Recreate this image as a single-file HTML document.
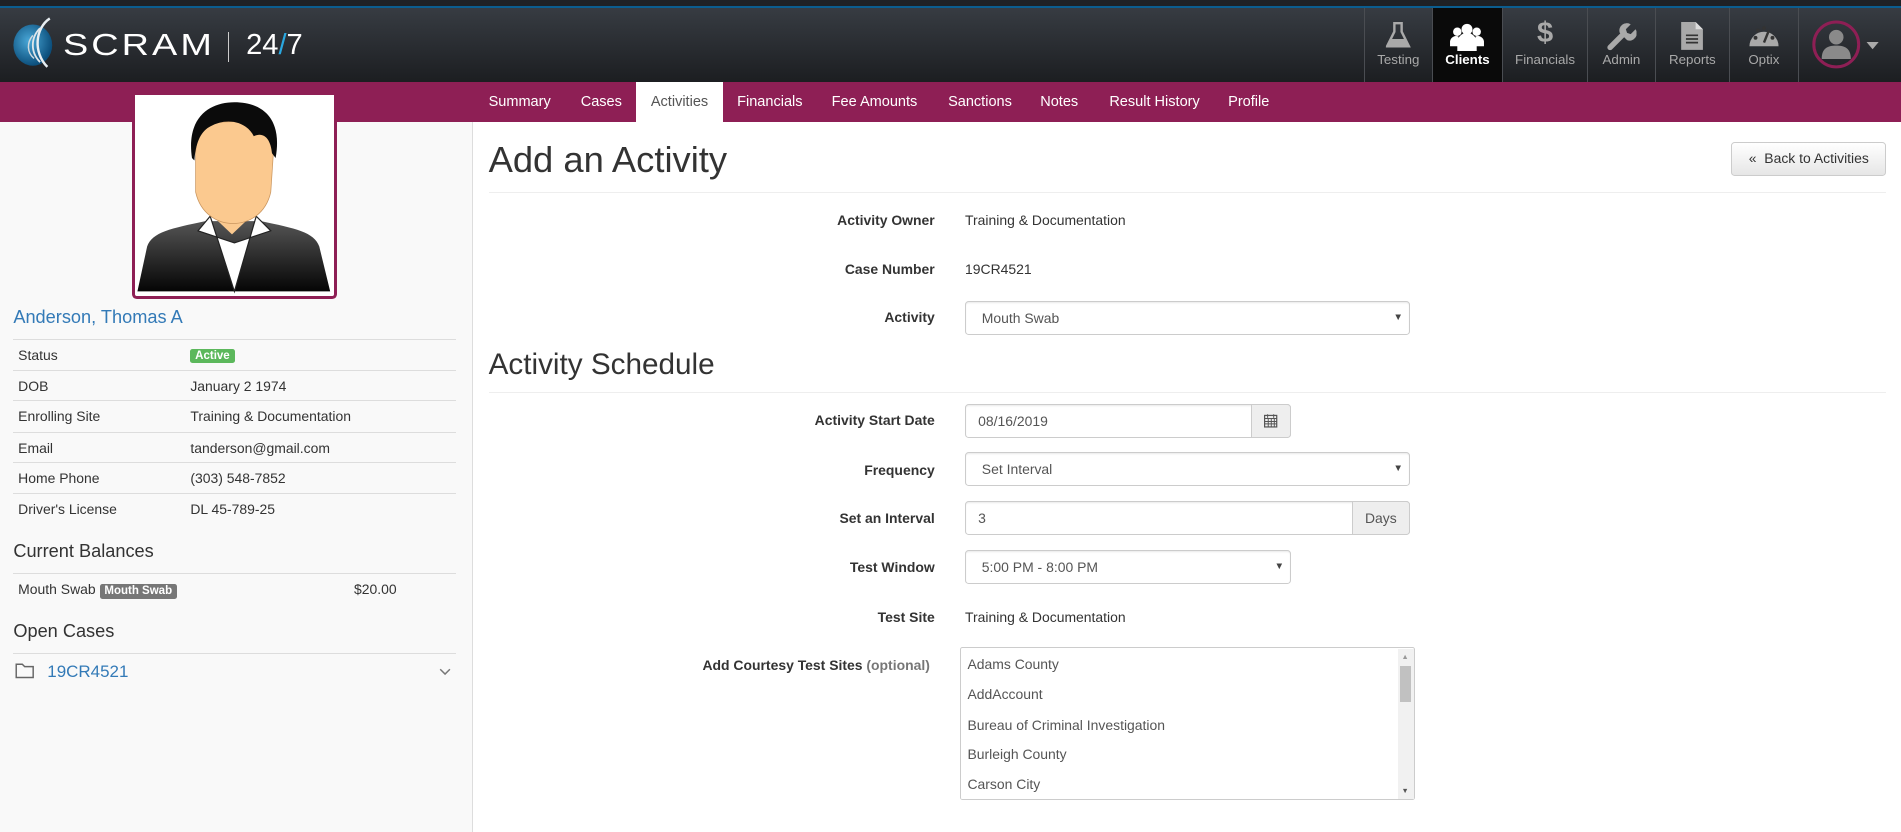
<!DOCTYPE html>
<html><head><meta charset="utf-8">
<style>
*{box-sizing:border-box;margin:0;padding:0}
html,body{width:1901px;height:832px;overflow:hidden;background:#fff}
#w{zoom:1.21237;width:1568px;height:686px;position:relative;font-family:"Liberation Sans",Arial,sans-serif;color:#333;font-size:11.5px;overflow:hidden}
.a{position:absolute}
#hdr{left:0;top:0;width:1568px;height:68px;background:linear-gradient(#3a3f46,#1c1e21)}
#topl{left:0;top:0;width:1568px;height:7px;background:#1f2125;border-bottom:2px solid #0b5d8f}
.nav{top:7px;height:61px;border-left:1px solid #4a4d52;text-align:center;color:#a9a9a9;font-size:11px}
.nav span{position:absolute;left:0;right:0;top:36px}
.nav svg{position:absolute;left:50%;top:11px;transform:translateX(-50%)}
#band{left:0;top:68px;width:1568px;height:33px;background:#8e1f55}
.tab{top:68px;height:33px;line-height:33px;color:#fff;font-size:12px}
#side{left:0;top:101px;width:390px;height:600px;background:#f9f9f9;border-right:1px solid #ddd}
.row{left:11px;width:365px;height:25.5px;border-top:1px solid #ddd;line-height:25px;padding-left:4px}
.row b{font-weight:normal;position:absolute;left:146px}
.lbl{width:380px;text-align:right;font-weight:bold;left:391px}
.ctl{border:1px solid #ccc;border-radius:3px;background:#fff;height:28px;line-height:27px;padding-left:13px;color:#555;box-shadow:inset 0 1px 1px rgba(0,0,0,.075)}
.car{position:absolute;right:5px;top:0;font-size:8px;color:#444}
.li{left:798px;color:#555;font-size:11.5px}
</style></head><body><div id="w">
<div class="a" id="hdr"></div><div class="a" id="topl"></div>
<svg class="a" style="left:9px;top:13px" width="40" height="44" viewBox="0 0 40 44">
<defs><radialGradient id="g" cx=".4" cy=".4" r=".6"><stop offset="0" stop-color="#4aa8d8"/><stop offset="1" stop-color="#0c4f7c"/></radialGradient></defs>
<ellipse cx="18" cy="24" rx="16" ry="17" fill="url(#g)"/>
<path d="M32 2 C20 10 18 30 30 42" stroke="#e8eef2" stroke-width="2" fill="none"/>
<path d="M24 10 C16 18 16 30 24 38" stroke="#dfe6ea" stroke-width="1.5" fill="none"/>
<path d="M18 16 C13 22 13 30 19 35" stroke="#cfd9df" stroke-width="1.2" fill="none"/>
</svg>
<div class="a" style="left:52px;top:24px;color:#fff;font-size:25px;letter-spacing:2px;transform:scaleX(1.25);transform-origin:left">SCRAM</div>
<div class="a" style="left:188px;top:26px;width:1px;height:25px;background:#ccc"></div>
<div class="a" style="left:203px;top:24px;color:#fff;font-size:24px;font-weight:300">24<span style="color:#2aa8e0">/</span>7</div>

<div class="a nav" style="left:1125px;width:56px"><svg width="20" height="22" viewBox="0 0 20 22"><path d="M6 1h8M7 1v7L1 20h18L13 8V1" fill="none" stroke="#a9a9a9" stroke-width="2"/><path d="M4 14h12l3 6H1z" fill="#a9a9a9"/></svg><span>Testing</span></div>
<div class="a nav" style="left:1181px;width:58px;background:#0a0a0a;color:#fff;font-weight:bold"><svg width="28" height="24" viewBox="0 0 28 24"><circle cx="14" cy="6" r="4.5" fill="#fff"/><circle cx="6" cy="8" r="3.5" fill="#fff"/><circle cx="22" cy="8" r="3.5" fill="#fff"/><path d="M6 24v-7a8 8 0 0 1 16 0v7z" fill="#fff"/><path d="M0 20v-4a5 5 0 0 1 7-4v8zM28 20v-4a5 5 0 0 0-7-4v8z" fill="#fff"/></svg><span>Clients</span></div>
<div class="a nav" style="left:1239px;width:70px"><div style="position:absolute;left:0;right:0;top:7px;font-size:24px;font-weight:bold;color:#a9a9a9">$</div><span>Financials</span></div>
<div class="a nav" style="left:1309px;width:56px"><svg width="24" height="24" viewBox="0 0 24 24"><path d="M3 21 L13 11" stroke="#a9a9a9" stroke-width="4.5" stroke-linecap="round"/><path d="M11 9a6 6 0 0 1 9-7l-4 4 1 3 3 1 4-4a6 6 0 0 1-7 9z" fill="#a9a9a9"/></svg><span>Admin</span></div>
<div class="a nav" style="left:1365px;width:61px"><svg width="18" height="23" viewBox="0 0 18 23"><path d="M0 0h12l6 6v17H0z" fill="#a9a9a9"/><path d="M12 0v6h6" fill="#ddd"/><path d="M4 11h10M4 14h10M4 17h10" stroke="#333" stroke-width="1.4"/></svg><span>Reports</span></div>
<div class="a nav" style="left:1426px;width:57px"><svg width="26" height="22" viewBox="0 0 26 22"><path d="M1 20a12 12 0 1 1 24 0z" fill="#a9a9a9"/><circle cx="6" cy="13" r="1.6" fill="#333"/><circle cx="8" cy="7" r="1.6" fill="#333"/><circle cx="13" cy="5" r="1.6" fill="#333"/><circle cx="20" cy="13" r="1.6" fill="#333"/><path d="M13 17l4-10" stroke="#333" stroke-width="2"/></svg><span>Optix</span></div>
<div class="a nav" style="left:1483px;width:85px"></div>
<svg class="a" style="left:1495px;top:16px" width="60" height="42" viewBox="0 0 60 42"><circle cx="20" cy="21" r="18.5" fill="none" stroke="#8e1f55" stroke-width="2.5"/><circle cx="20" cy="15" r="6" fill="#8a8a8a"/><path d="M8 33c0-9 5-11 12-11s12 2 12 11z" fill="#8a8a8a"/><path d="M45 19h10l-5 6z" fill="#aaa"/></svg>

<div class="a" id="band"></div>
<div class="a tab" style="left:403px">Summary</div>
<div class="a tab" style="left:479px">Cases</div>
<div class="a tab" style="left:525px;width:71px;background:#fff;color:#555;text-align:center">Activities</div>
<div class="a tab" style="left:608px">Financials</div>
<div class="a tab" style="left:686px">Fee Amounts</div>
<div class="a tab" style="left:782px">Sanctions</div>
<div class="a tab" style="left:858px">Notes</div>
<div class="a tab" style="left:915px">Result History</div>
<div class="a tab" style="left:1013px">Profile</div>

<div class="a" id="side"></div>
<div class="a" style="left:109px;top:78px;width:169px;height:169px;background:#fff;border:3px solid #8e1f55;border-top:none;border-radius:0 0 4px 4px;overflow:hidden">
<svg width="163" height="166" viewBox="0 0 163 166">
<defs><linearGradient id="s" x1="0" y1="0" x2="0" y2="1"><stop offset="0" stop-color="#555"/><stop offset="1" stop-color="#050505"/></linearGradient></defs>
<path d="M2 162 L10 125 C14 113 30 110 58 104 L104 104 C132 110 148 113 152 125 L161 162 Z" fill="url(#s)"/>
<path d="M60 96 L80 115 L100 96 L98 88 L62 88 Z" fill="#fbc98f"/>
<path d="M62 100 L82 162 L100 100 L112 112 L82 122 L52 112 Z" fill="#fff" stroke="#222" stroke-width="1"/>
<path d="M50 50 C50 24 62 22 81 22 C100 22 114 24 114 50 L112 80 C108 98 94 106 81 106 C68 106 54 98 50 80 Z" fill="#fbc98f" stroke="#c9955e" stroke-width=".6"/>
<path d="M47 52 C42 18 62 6 82 6 C104 6 122 18 116 52 L113 48 C112 36 106 30 98 34 C92 22 76 18 62 26 C54 30 50 40 49 54 Z" fill="#0b0b0b"/>
</svg></div>

<div class="a" style="left:11px;top:253px;font-size:15px;color:#337ab7">Anderson, Thomas A</div>
<div class="a row" style="top:280px">Status<b><span style="background:#5cb85c;color:#fff;font-size:9.5px;font-weight:bold;padding:1px 4px;border-radius:2px;position:relative;top:-1px">Active</span></b></div>
<div class="a row" style="top:305px">DOB<b>January 2 1974</b></div>
<div class="a row" style="top:330px">Enrolling Site<b>Training &amp; Documentation</b></div>
<div class="a row" style="top:356px">Email<b>tanderson@gmail.com</b></div>
<div class="a row" style="top:381px">Home Phone<b>(303) 548-7852</b></div>
<div class="a row" style="top:407px">Driver's License<b>DL 45-789-25</b></div>
<div class="a" style="left:11px;top:446px;font-size:15px">Current Balances</div>
<div class="a row" style="top:473px;height:30px">Mouth Swab <span style="background:#777;color:#fff;font-size:9.5px;font-weight:bold;padding:1px 4px;border-radius:2px">Mouth Swab</span><b style="left:281px">$20.00</b></div>
<div class="a" style="left:11px;top:512px;font-size:15px">Open Cases</div>
<div class="a" style="left:11px;top:539px;width:365px;border-top:1px solid #ddd"></div>
<svg class="a" style="left:12px;top:547px" width="16" height="13" viewBox="0 0 16 13"><path d="M1 1h5l2 2h7v9H1z" fill="none" stroke="#666" stroke-width="1.2"/></svg>
<div class="a" style="left:39px;top:546px;font-size:14px;color:#337ab7">19CR4521</div>
<svg class="a" style="left:362px;top:551px" width="10" height="7" viewBox="0 0 10 7"><path d="M1 1l4 4 4-4" stroke="#777" fill="none" stroke-width="1.2"/></svg>

<div class="a" style="left:403px;top:115px;font-size:30px">Add an Activity</div>
<div class="a" style="left:403px;top:158px;width:1153px;border-top:1px solid #eee"></div>
<div class="a" style="left:1428px;top:117px;width:128px;height:28px;border:1px solid #ccc;border-radius:3px;background:linear-gradient(#fff,#e6e6e6);line-height:26px;text-align:center;font-size:11.5px">« &nbsp;Back to Activities</div>

<div class="a lbl" style="top:175px">Activity Owner</div><div class="a" style="left:796px;top:175px">Training &amp; Documentation</div>
<div class="a lbl" style="top:215px">Case Number</div><div class="a" style="left:796px;top:215px">19CR4521</div>
<div class="a lbl" style="top:255px">Activity</div>
<div class="a ctl" style="left:796px;top:248px;width:367px">Mouth Swab<span class="car">▼</span></div>

<div class="a" style="left:403px;top:287px;font-size:24.5px">Activity Schedule</div>
<div class="a" style="left:403px;top:323px;width:1153px;border-top:1px solid #eee"></div>

<div class="a lbl" style="top:340px">Activity Start Date</div>
<div class="a ctl" style="left:796px;top:333px;width:269px;padding-left:10px">08/16/2019</div>
<div class="a" style="left:1032px;top:333px;width:33px;height:28px;background:#eee;border:1px solid #ccc;border-radius:0 3px 3px 0"><svg style="position:absolute;left:10px;top:7px" width="11" height="12" viewBox="0 0 11 12"><rect x=".5" y="2" width="10" height="9.5" fill="none" stroke="#555"/><path d="M.5 4.5h10M3 1v3M8 1v3M.5 7h10M.5 9h10M3.5 4.5v7M6 4.5v7M8.5 4.5v7" stroke="#555" stroke-width=".8"/></svg></div>

<div class="a lbl" style="top:381px">Frequency</div>
<div class="a ctl" style="left:796px;top:373px;width:367px">Set Interval<span class="car">▼</span></div>
<div class="a lbl" style="top:421px">Set an Interval</div>
<div class="a ctl" style="left:796px;top:413px;width:367px;padding-left:10px">3</div>
<div class="a" style="left:1115px;top:413px;width:48px;height:28px;background:#eee;border:1px solid #ccc;border-radius:0 3px 3px 0;line-height:27px;text-align:center;color:#555">Days</div>
<div class="a lbl" style="top:461px">Test Window</div>
<div class="a ctl" style="left:796px;top:454px;width:269px">5:00 PM - 8:00 PM<span class="car">▼</span></div>
<div class="a lbl" style="top:502px">Test Site</div><div class="a" style="left:796px;top:502px">Training &amp; Documentation</div>
<div class="a lbl" style="top:542px;width:376px">Add Courtesy Test Sites <span style="color:#777">(optional)</span></div>
<div class="a" style="left:792px;top:534px;width:375px;height:126px;border:1px solid #ccc;border-radius:2px;background:#fff"></div>
<div class="a" style="left:1153px;top:535px;width:13px;height:124px;background:#f1f1f1"></div>
<div class="a" style="left:1155px;top:549px;width:9px;height:30px;background:#c1c1c1"></div>
<div class="a" style="left:1156px;top:538px;font-size:6px;color:#999">▲</div>
<div class="a" style="left:1156px;top:648px;font-size:6px;color:#555">▼</div>
<div class="a li" style="top:541px">Adams County</div>
<div class="a li" style="top:566px">AddAccount</div>
<div class="a li" style="top:591px">Bureau of Criminal Investigation</div>
<div class="a li" style="top:615px">Burleigh County</div>
<div class="a li" style="top:640px">Carson City</div>
</div></body></html>
